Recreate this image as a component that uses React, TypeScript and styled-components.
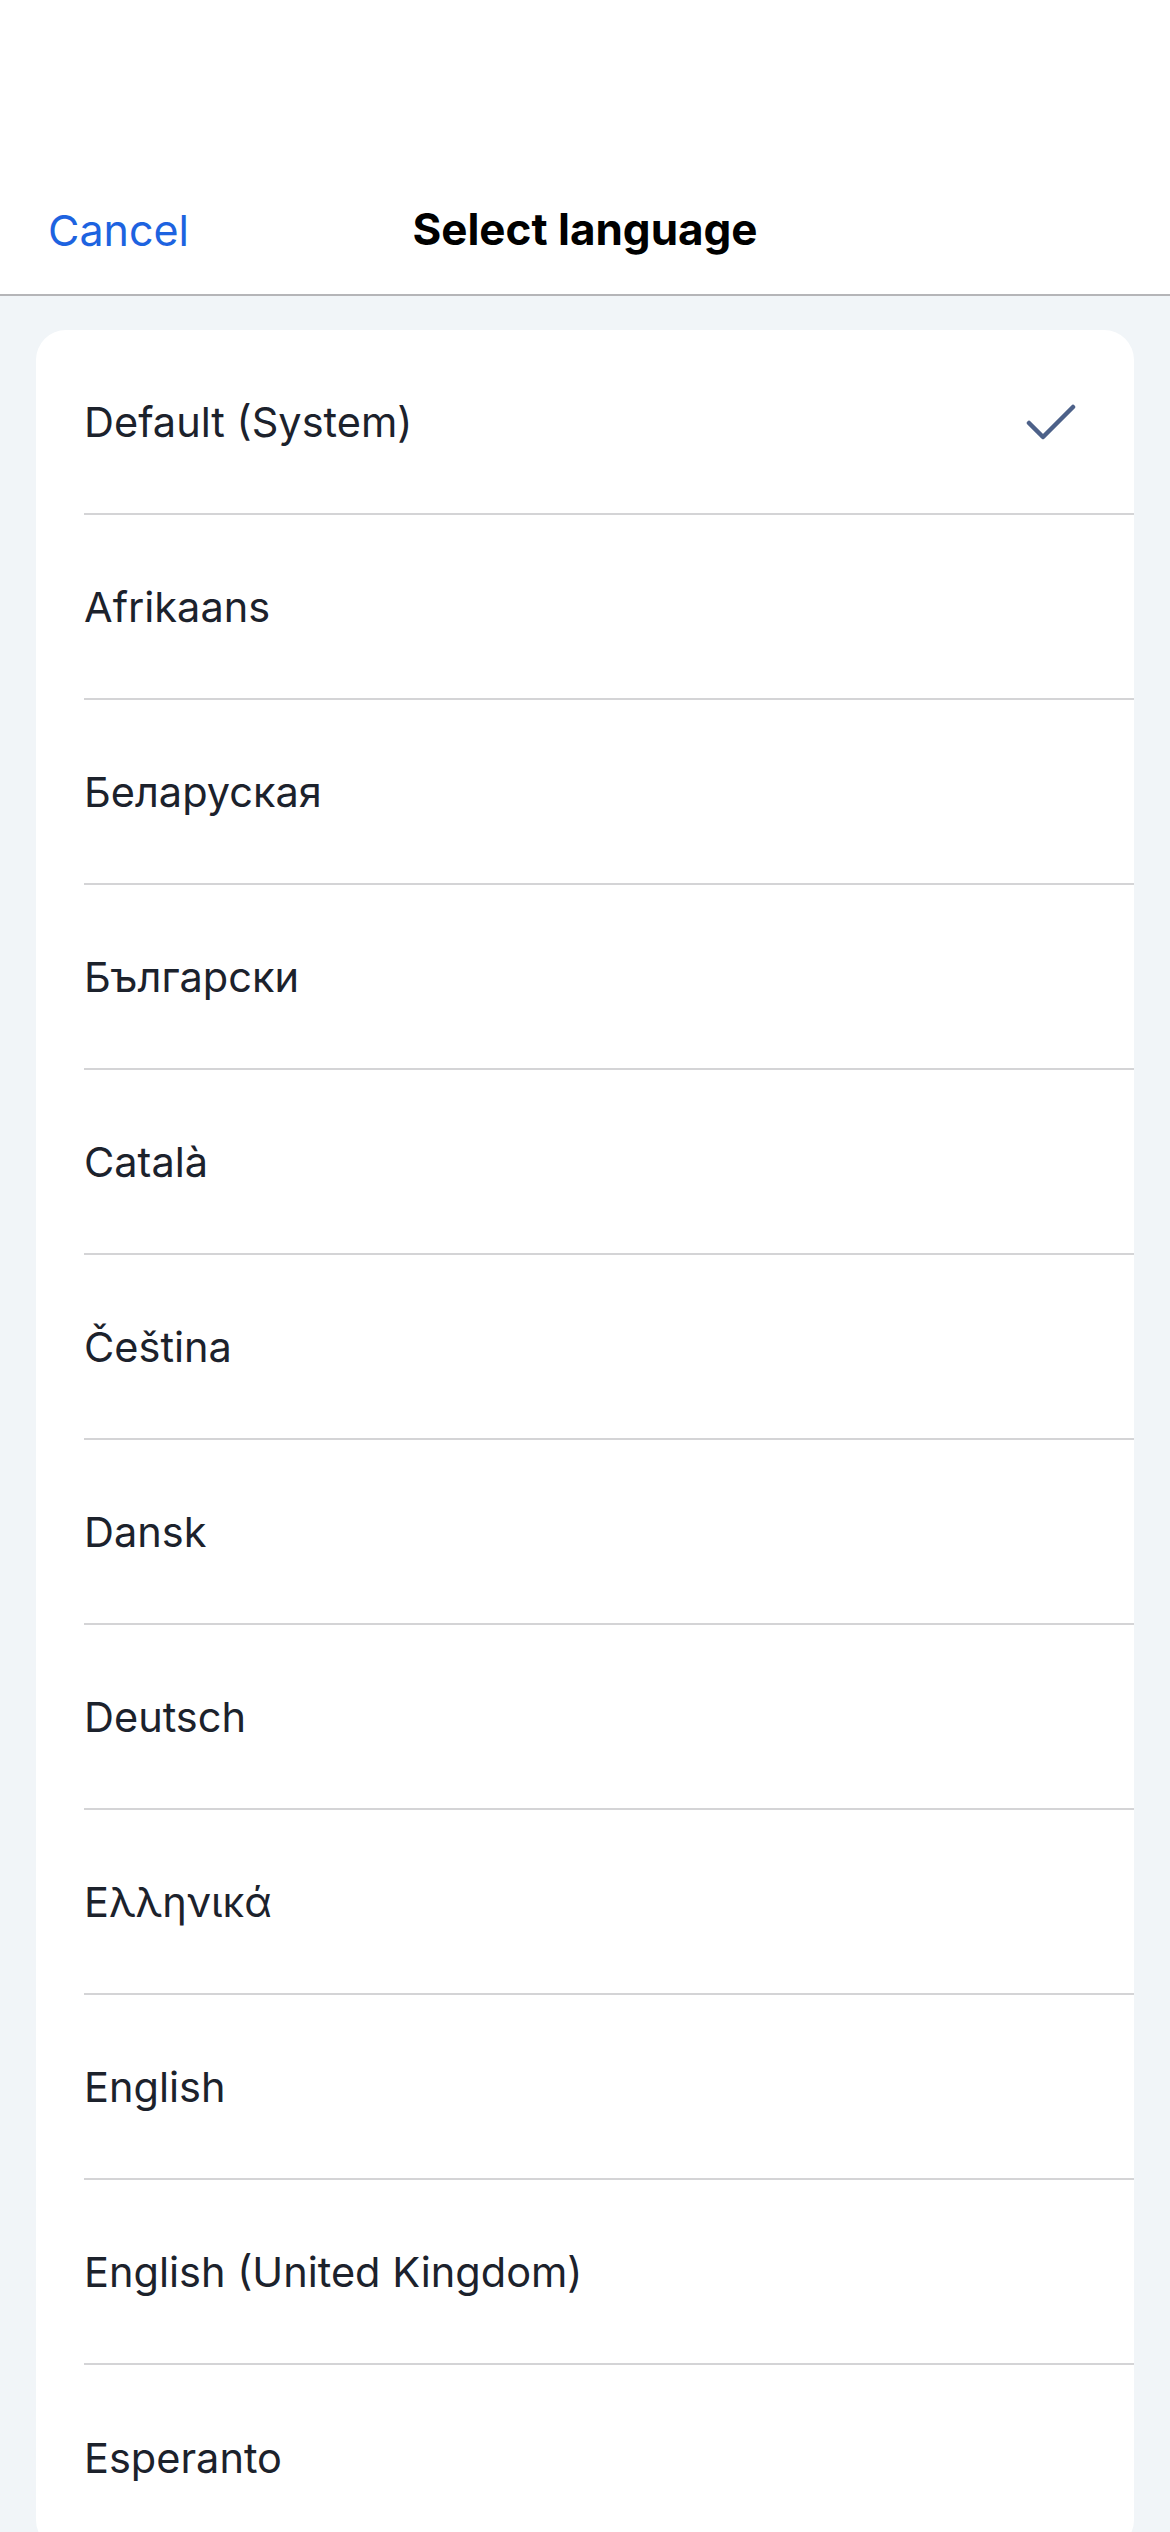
import styled, { createGlobalStyle } from 'styled-components'
import { useState } from 'react'

const GlobalStyle = createGlobalStyle`
  html, body {
    margin: 0;
    padding: 0;
  }
  body {
    font-family: Inter, "Noto Sans", "Liberation Sans", sans-serif;
    background: #f1f5f8;
  }
`

const Screen = styled.div`
  width: 100vw;
  height: 100vh;
  display: flex;
  flex-direction: column;
  overflow: hidden;
  background: #f1f5f8;
`

const Header = styled.div`
  height: 296px;
  flex-shrink: 0;
  background: #ffffff;
  border-bottom: 2px solid #b5b5b8;
  box-sizing: border-box;
  display: grid;
  grid-template-columns: 1fr auto 1fr;
  align-items: end;
  padding: 0 48px 38px 48px;
`

const CancelButton = styled.button`
  justify-self: start;
  background: none;
  border: none;
  padding: 0;
  font-family: inherit;
  font-size: 43px;
  color: #1d63e0;
  cursor: pointer;
`

const Title = styled.div`
  font-size: 44px;
  font-weight: 700;
  color: #000000;
`

const Body = styled.div`
  flex: 1;
  padding: 34px 36px 0 36px;
`

const Card = styled.div`
  background: #ffffff;
  border-radius: 30px;
  overflow: hidden;
`

const Row = styled.div<{ $last: boolean }>`
  height: 185px;
  box-sizing: border-box;
  margin-left: 48px;
  padding-right: 58px;
  display: flex;
  align-items: center;
  justify-content: space-between;
  border-bottom: ${p => (p.$last ? 'none' : '2px solid #d4d4d6')};
  cursor: pointer;
`

const Label = styled.span`
  font-size: 41.5px;
  color: #1c222c;
`

const CheckMark = () => (
  <svg width="50" height="38" viewBox="0 0 50 38" fill="none">
    <path
      d="M3 20 L17 34 L47 4"
      stroke="#4d6189"
      strokeWidth="4.5"
      strokeLinecap="round"
      strokeLinejoin="round"
    />
  </svg>
)

const languages = [
  'Default (System)',
  'Afrikaans',
  'Беларуская',
  'Български',
  'Català',
  'Čeština',
  'Dansk',
  'Deutsch',
  'Ελληνικά',
  'English',
  'English (United Kingdom)',
  'Esperanto',
]

export default function App() {
  const [selected, setSelected] = useState<number>(0)

  return (
    <>
      <GlobalStyle />
      <Screen>
        <Header>
          <CancelButton>Cancel</CancelButton>
          <Title>Select language</Title>
          <div />
        </Header>
        <Body>
          <Card>
            {languages.map((lang, index) => (
              <Row
                key={lang}
                $last={index == languages.length - 1}
                onClick={() => setSelected(index)}>
                <Label>{lang}</Label>
                {index == selected && <CheckMark />}
              </Row>
            ))}
          </Card>
        </Body>
      </Screen>
    </>
  )
}
